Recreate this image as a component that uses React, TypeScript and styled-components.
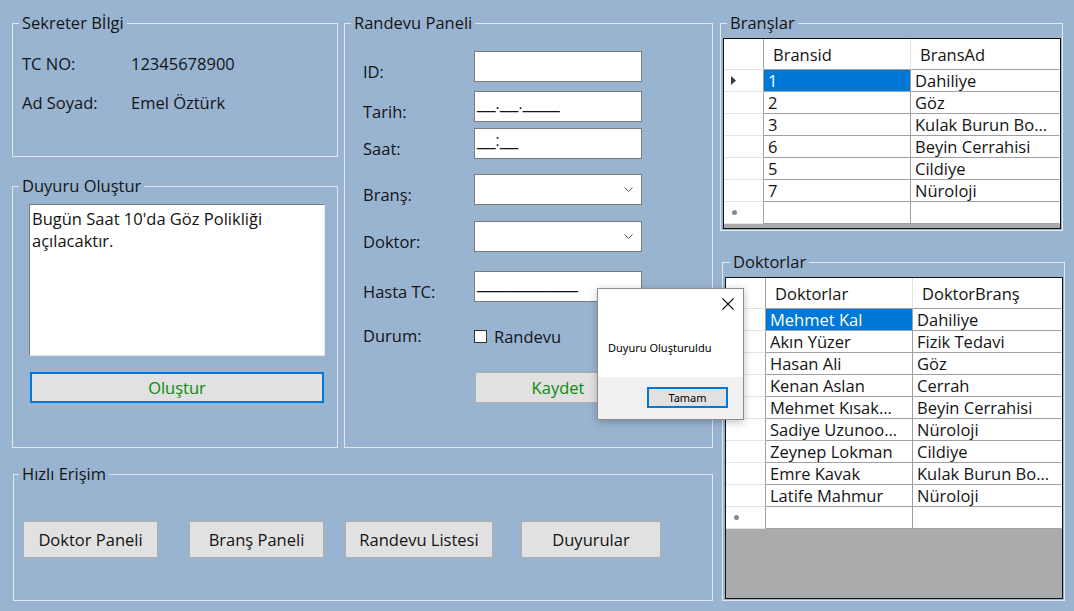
import React from "react";
import styled, { createGlobalStyle } from "styled-components";

const FONT = `"Open Sans", Lato, sans-serif`;
const FS = "16.5px";

const Global = createGlobalStyle`
  html, body { margin: 0; padding: 0; background: #99b4d1; }
  body { font-family: ${FONT}; color: #141414; font-size: ${FS}; }
  * { box-sizing: border-box; }
`;

const Page = styled.div`
  position: relative;
  width: 1074px;
  height: 611px;
  padding: 14px 0 0 12px;
  display: grid;
  grid-template-columns: 326px 369px 346px;
  grid-template-rows: 434px 136px;
  column-gap: 6px;
  row-gap: 17px;
`;

const LeftColumn = styled.div`
  display: flex;
  flex-direction: column;
  gap: 20px;
`;

const RightColumn = styled.div`
  grid-column: 3;
  grid-row: 1 / 3;
  display: flex;
  flex-direction: column;
  gap: 22px;
`;

const Group = styled.fieldset<{ $h?: number; $ml?: number; $w?: number; $span?: boolean }>`
  margin: 0 0 0 ${(p) => p.$ml ?? 0}px;
  padding: 0;
  min-width: 0;
  border: 1px solid #e4e8ec;
  ${(p) => (p.$h ? `height: ${p.$h}px;` : "")}
  ${(p) => (p.$w ? `width: ${p.$w}px;` : "")}
  ${(p) => (p.$span ? "grid-column: 1 / 3;" : "")}
`;

const Legend = styled.legend<{ $ml?: number }>`
  margin-left: ${(p) => p.$ml ?? 6}px;
  padding: 0 3px;
  font-size: ${FS};
  line-height: 18px;
  height: 18px;
`;

/* Sekreter */
const InfoGrid = styled.div`
  display: grid;
  grid-template-columns: 109px auto;
  row-gap: 21px;
  padding: 23px 0 0 9px;
  line-height: 18px;
`;

/* Duyuru */
const NoticeBody = styled.div`
  padding: 9px 0 0 16px;
  display: flex;
  flex-direction: column;
`;

const NoteBox = styled.div`
  width: 296px;
  height: 152px;
  background: #fff;
  border: 1px solid;
  border-color: #7a7a7a #e6e6e6 #e6e6e6 #7a7a7a;
  padding: 3px 2px;
  font-size: ${FS};
  line-height: 22px;
`;

const Button = styled.button<{ $w: number; $h: number; $focus?: boolean; $green?: boolean; $ml?: number; $mt?: number }>`
  width: ${(p) => p.$w}px;
  height: ${(p) => p.$h}px;
  margin: ${(p) => p.$mt ?? 0}px 0 0 ${(p) => p.$ml ?? 0}px;
  background: #e1e1e1;
  border: ${(p) => (p.$focus ? "2px solid #0078d7" : "1px solid #adadad")};
  color: ${(p) => (p.$green ? "#0a8a0a" : "#141414")};
  font-family: ${FONT};
  font-size: ${FS};
  padding: 0;
  flex: none;
`;

/* Randevu */
const FormBody = styled.div`
  padding: 19px 0 0 18px;
  display: flex;
  flex-direction: column;
`;

const FormRow = styled.div<{ $mt: number; $h?: number }>`
  display: flex;
  align-items: center;
  height: ${(p) => p.$h ?? 31}px;
  margin-top: ${(p) => p.$mt}px;
`;

const FieldLabel = styled.div<{ $shift?: boolean }>`
  width: 111px;
  flex: none;
  line-height: 18px;
  padding-top: ${(p) => (p.$shift ? 10 : 0)}px;
`;

const Input = styled.div`
  width: 168px;
  height: 31px;
  background: #fff;
  border: 1px solid #7a7a7a;
  padding: 0 2px;
  display: flex;
  align-items: center;
  font-size: ${FS};
  white-space: nowrap;
  overflow: hidden;
`;

const Mask = styled.span`
  font-family: "Liberation Sans", Arial, sans-serif;
  font-size: 16.5px;
  line-height: 19px;
  padding-bottom: 7px;
`;

const Chevron = styled.svg`
  margin-left: auto;
  margin-right: 6px;
`;

const CheckBox = styled.span`
  width: 13px;
  height: 13px;
  border: 1px solid #333;
  background: #fff;
  margin-right: 7px;
  flex: none;
`;

/* Quick access */
const QuickRow = styled.div`
  display: flex;
  padding: 38px 0 0 9px;
`;

/* Data grid */
const GridFrame = styled.div<{ $h: number }>`
  height: ${(p) => p.$h}px;
  margin: 6px 1px 0 2px;
  border: 1px solid #111;
  background: #ababab;
  overflow: hidden;
`;

const Table = styled.div`
  display: grid;
  grid-template-columns: 40px 147px 1fr;
  background: #fff;
`;

const HeadCell = styled.div<{ $corner?: boolean; $last?: boolean }>`
  height: 31px;
  padding-left: 9px;
  display: flex;
  align-items: center;
  border-bottom: 1px solid ${(p) => (p.$corner ? "#e2e2e2" : "#a0a0a0")};
  border-right: 1px solid ${(p) => (p.$last ? "transparent" : p.$corner ? "#a0a0a0" : "#e2e2e2")};
  background: #fff;
`;

const RowHead = styled.div`
  height: 22px;
  border-bottom: 1px solid #e4e4e4;
  border-right: 1px solid #a0a0a0;
  display: flex;
  align-items: center;
  padding-left: 7px;
  background: #fff;
`;

const Cell = styled.div<{ $sel?: boolean; $last?: boolean }>`
  height: 22px;
  padding: 1px 4px 0 4px;
  line-height: 20px;
  border-bottom: 1px solid #a0a0a0;
  border-right: 1px solid ${(p) => (p.$last ? "transparent" : "#a0a0a0")};
  background: ${(p) => (p.$sel ? "#0078d7" : "#fff")};
  color: ${(p) => (p.$sel ? "#fff" : "#141414")};
  white-space: nowrap;
  overflow: hidden;
  text-overflow: ellipsis;
`;

const NewMark = styled.span`
  width: 5px;
  height: 5px;
  border-radius: 50%;
  background: #8a8a8a;
  margin-left: 1px;
`;

/* Dialog */
const Dialog = styled.div`
  position: absolute;
  left: 597px;
  top: 288px;
  width: 147px;
  height: 132px;
  background: #fff;
  border: 1px solid #8c8c8c;
  box-shadow: 0 2px 8px rgba(0, 0, 0, 0.25);
  display: flex;
  flex-direction: column;
  font-family: "Noto Sans", "Open Sans", sans-serif;
  font-size: 11px;
  color: #000;
`;

const DialogTop = styled.div`
  height: 29px;
  display: flex;
  justify-content: flex-end;
  align-items: center;
  padding-right: 9px;
`;

const DialogMessage = styled.div`
  flex: 1;
  display: flex;
  align-items: center;
  padding-left: 10px;
`;

const DialogFooter = styled.div`
  height: 42px;
  background: #f0f0f0;
  display: flex;
  justify-content: flex-end;
  padding: 10px 15px 0 0;
`;

const DialogButton = styled.button`
  width: 81px;
  height: 21px;
  background: #e1e1e1;
  border: 2px solid #0078d7;
  font-family: "Noto Sans", "Open Sans", sans-serif;
  font-size: 11px;
  color: #000;
  padding: 0;
`;

type GridProps = {
  cols: [string, string];
  rows: [string, string][];
  h: number;
};

const Arrow = () => (
  <svg width="6" height="9" viewBox="0 0 6 9">
    <path d="M0 0 L5 4.5 L0 9 Z" fill="#3a3a3a" />
  </svg>
);

const DataGrid = ({ cols, rows, h }: GridProps) => (
  <GridFrame $h={h}>
    <Table>
      <HeadCell $corner />
      <HeadCell>{cols[0]}</HeadCell>
      <HeadCell $last>{cols[1]}</HeadCell>
      {rows.map((r, i) => (
        <React.Fragment key={i}>
          <RowHead>{i === 0 ? <Arrow /> : null}</RowHead>
          <Cell $sel={i === 0}>{r[0]}</Cell>
          <Cell $last>{r[1]}</Cell>
        </React.Fragment>
      ))}
      <RowHead>
        <NewMark />
      </RowHead>
      <Cell />
      <Cell $last />
    </Table>
  </GridFrame>
);

const ChevronIcon = () => (
  <Chevron width="9" height="6" viewBox="0 0 9 6">
    <polyline points="0.5,0.5 4.5,4.5 8.5,0.5" fill="none" stroke="#555" strokeWidth="1" />
  </Chevron>
);

const branches: [string, string][] = [
  ["1", "Dahiliye"],
  ["2", "Göz"],
  ["3", "Kulak Burun Bo…"],
  ["6", "Beyin Cerrahisi"],
  ["5", "Cildiye"],
  ["7", "Nüroloji"],
];

const doctors: [string, string][] = [
  ["Mehmet Kal", "Dahiliye"],
  ["Akın Yüzer", "Fizik Tedavi"],
  ["Hasan Ali", "Göz"],
  ["Kenan Aslan", "Cerrah"],
  ["Mehmet Kısak…", "Beyin Cerrahisi"],
  ["Sadiye Uzunoo…", "Nüroloji"],
  ["Zeynep Lokman", "Cildiye"],
  ["Emre Kavak", "Kulak Burun Bo…"],
  ["Latife Mahmur", "Nüroloji"],
];

const quick = [
  { label: "Doktor Paneli", w: 135, ml: 0 },
  { label: "Branş Paneli", w: 135, ml: 31 },
  { label: "Randevu Listesi", w: 148, ml: 21 },
  { label: "Duyurular", w: 140, ml: 28 },
];

export default function App() {
  return (
    <>
      <Global />
      <Page>
        <LeftColumn>
          <Group $h={143}>
            <Legend>Sekreter Bİlgi</Legend>
            <InfoGrid>
              <span>TC NO:</span>
              <span>12345678900</span>
              <span>Ad Soyad:</span>
              <span>Emel Öztürk</span>
            </InfoGrid>
          </Group>
          <Group $h={271}>
            <Legend>Duyuru Oluştur</Legend>
            <NoticeBody>
              <NoteBox>Bugün Saat 10'da Göz Polikliği açılacaktır.</NoteBox>
              <Button $w={294} $h={31} $focus $green $ml={1} $mt={16}>
                Oluştur
              </Button>
            </NoticeBody>
          </Group>
        </LeftColumn>

        <Group $h={434}>
          <Legend>Randevu Paneli</Legend>
          <FormBody>
            <FormRow $mt={0}>
              <FieldLabel $shift>ID:</FieldLabel>
              <Input />
            </FormRow>
            <FormRow $mt={9}>
              <FieldLabel $shift>Tarih:</FieldLabel>
              <Input>
                <Mask>__.__.____</Mask>
              </Input>
            </FormRow>
            <FormRow $mt={6}>
              <FieldLabel $shift>Saat:</FieldLabel>
              <Input>
                <Mask>__:__</Mask>
              </Input>
            </FormRow>
            <FormRow $mt={15}>
              <FieldLabel $shift>Branş:</FieldLabel>
              <Input>
                <ChevronIcon />
              </Input>
            </FormRow>
            <FormRow $mt={16}>
              <FieldLabel $shift>Doktor:</FieldLabel>
              <Input>
                <ChevronIcon />
              </Input>
            </FormRow>
            <FormRow $mt={19}>
              <FieldLabel $shift>Hasta TC:</FieldLabel>
              <Input>
                <Mask>___________</Mask>
              </Input>
            </FormRow>
            <FormRow $mt={24} $h={20}>
              <FieldLabel>Durum:</FieldLabel>
              <CheckBox />
              <span>Randevu</span>
            </FormRow>
            <Button $w={166} $h={31} $green $ml={112} $mt={26}>
              Kaydet
            </Button>
          </FormBody>
        </Group>

        <RightColumn>
          <Group $h={217} $ml={1} $w={343}>
            <Legend>Branşlar</Legend>
            <DataGrid cols={["Bransid", "BransAd"]} rows={branches} h={191} />
          </Group>
          <Group $h={348} $ml={3} $w={343}>
            <Legend $ml={7}>Doktorlar</Legend>
            <DataGrid cols={["Doktorlar", "DoktorBranş"]} rows={doctors} h={322} />
          </Group>
        </RightColumn>

        <Group $h={136} $span $ml={1} $w={700}>
          <Legend $ml={5}>Hızlı Erişim</Legend>
          <QuickRow>
            {quick.map((q) => (
              <Button key={q.label} $w={q.w} $h={37} $ml={q.ml}>
                {q.label}
              </Button>
            ))}
          </QuickRow>
        </Group>

        <Dialog>
          <DialogTop>
            <svg width="12" height="12" viewBox="0 0 12 12">
              <path d="M0.5 0.5 L11.5 11.5 M11.5 0.5 L0.5 11.5" stroke="#111" strokeWidth="1.1" />
            </svg>
          </DialogTop>
          <DialogMessage>Duyuru Oluşturuldu</DialogMessage>
          <DialogFooter>
            <DialogButton>Tamam</DialogButton>
          </DialogFooter>
        </Dialog>
      </Page>
    </>
  );
}
